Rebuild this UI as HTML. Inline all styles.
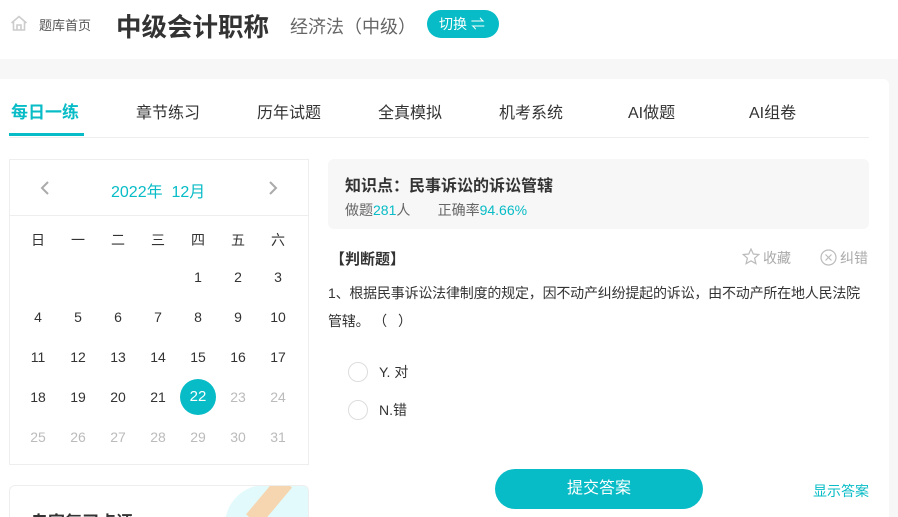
<!DOCTYPE html>
<html><head><meta charset="utf-8"><style>
*{margin:0;padding:0;box-sizing:border-box}
html{width:898px;height:517px;overflow:hidden}
body{width:898px;height:517px;overflow:hidden;background:#f7f7f7;font-family:"Liberation Sans","Noto Sans CJK SC",sans-serif;color:#333;position:relative}
.a{position:absolute;white-space:nowrap}
.hdr{position:absolute;left:0;top:0;width:898px;height:59px;background:#fff}
.card{position:absolute;left:0;top:79px;width:889px;height:438px;background:#fff;border-radius:0 6px 0 0}
.teal{color:#07bcc6}
.cal{position:absolute;left:9px;top:159px;width:300px;height:306px;border:1px solid #eee;background:#fff}
.cell{position:absolute;width:40px;text-align:center;font-size:14px;line-height:20px}
.g{color:#bbb}
</style></head><body>
<div class="hdr"></div>
<svg class="a" style="left:10px;top:15px" width="18" height="16" viewBox="0 0 18 16"><path d="M1.5 8 L9 1.5 L16.5 8 M3.5 6.5 V15 H14.5 V6.5 M7 15 V10 H11 V15" fill="none" stroke="#ccc" stroke-width="1.6"/></svg>
<div class="a" style="left:39px;top:15px;font-size:13px;color:#555">题库首页</div>
<div class="a" style="left:116px;top:7px;font-size:25.5px;font-weight:bold;color:#333">中级会计职称</div>
<div class="a" style="left:290px;top:13px;font-size:18px;color:#666">经济法（中级）</div>
<div class="a" style="left:427px;top:10px;width:72px;height:28px;border-radius:14px;background:#07bcc6;color:#fff;font-size:14px;line-height:28px;padding-left:12px">切换 <span style="font-size:14px">⇌</span></div>
<div class="card"></div>
<div class="a teal" style="left:11px;top:98px;font-size:17px;font-weight:bold">每日一练</div>
<div class="a" style="left:9px;top:133px;width:75px;height:3px;background:#07bcc6"></div>
<div class="a" style="left:9px;top:137px;width:860px;height:1px;background:#eee"></div>
<div class="a" style="left:136px;top:99px;font-size:16px">章节练习</div>
<div class="a" style="left:257px;top:99px;font-size:16px">历年试题</div>
<div class="a" style="left:378px;top:99px;font-size:16px">全真模拟</div>
<div class="a" style="left:499px;top:99px;font-size:16px">机考系统</div>
<div class="a" style="left:628px;top:99px;font-size:16px">AI做题</div>
<div class="a" style="left:749px;top:99px;font-size:16px">AI组卷</div>
<div class="cal">
<div class="a" style="left:0;top:55px;width:298px;height:1px;background:#eee"></div>
<svg class="a" style="left:29px;top:20px" width="12" height="16"><path d="M9 2 L3 8 L9 14" fill="none" stroke="#aaa" stroke-width="2"/></svg>
<svg class="a" style="left:257px;top:20px" width="12" height="16"><path d="M3 2 L9 8 L3 14" fill="none" stroke="#aaa" stroke-width="2"/></svg>
<div class="a teal" style="left:101px;top:18px;font-size:16px">2022年&nbsp;&nbsp;12月</div>
</div>
<div id="days"></div>
<div class="a" style="left:9px;top:485px;width:300px;height:32px;border:1px solid #eee;border-bottom:none;border-radius:6px 6px 0 0;background:#fff;overflow:hidden">
<div class="a" style="left:215px;top:-1px;width:90px;height:40px;background:#e2fafb;border-radius:40px 0 0 0"></div>
<div class="a" style="left:250px;top:-10px;width:18px;height:50px;background:#f5d6b0;transform:rotate(40deg)"></div>
<div class="a" style="left:21px;top:22px;font-size:17px;font-weight:bold">专家复习点评</div>
</div>
<div class="a" style="left:328px;top:159px;width:541px;height:70px;background:#f7f7f7;border-radius:6px"></div>
<div class="a" style="left:345px;top:172px;font-size:16px;font-weight:bold">知识点：民事诉讼的诉讼管辖</div>
<div class="a" style="left:345px;top:200px;font-size:14px;color:#666">做题<span class="teal">281</span>人&nbsp;&nbsp;&nbsp;&nbsp;&nbsp;&nbsp;&nbsp;正确率<span class="teal">94.66%</span></div>
<div class="a" style="left:330px;top:248px;font-size:15px;font-weight:bold">【判断题】</div>
<svg class="a" style="left:742px;top:248px" width="18" height="17" viewBox="0 0 18 17"><path d="M9 1 L11.3 6 L16.8 6.5 L12.6 10.2 L13.9 15.7 L9 12.8 L4.1 15.7 L5.4 10.2 L1.2 6.5 L6.7 6 Z" fill="none" stroke="#bbb" stroke-width="1.2"/></svg>
<div class="a" style="left:763px;top:248px;font-size:14px;color:#aaa">收藏</div>
<svg class="a" style="left:820px;top:249px" width="17" height="17"><circle cx="8.5" cy="8.5" r="7.5" fill="none" stroke="#bbb" stroke-width="1.2"/><path d="M5.5 5.5 L11.5 11.5 M11.5 5.5 L5.5 11.5" stroke="#bbb" stroke-width="1.2"/></svg>
<div class="a" style="left:840px;top:248px;font-size:14px;color:#aaa">纠错</div>
<div class="a" style="left:328px;top:279px;font-size:14px;line-height:28px;white-space:normal;width:545px;letter-spacing:-0.2px">1、根据民事诉讼法律制度的规定，因不动产纠纷提起的诉讼，由不动产所在地人民法院管辖。&nbsp;（&nbsp;&nbsp;&nbsp;）</div>
<div class="a" style="left:348px;top:362px;width:20px;height:20px;border:1px solid #ddd;border-radius:50%"></div>
<div class="a" style="left:379px;top:362px;font-size:14px">Y. 对</div>
<div class="a" style="left:348px;top:400px;width:20px;height:20px;border:1px solid #ddd;border-radius:50%"></div>
<div class="a" style="left:379px;top:400px;font-size:14px">N.错</div>
<div class="a" style="left:495px;top:469px;width:208px;height:40px;border-radius:20px;background:#07bcc6;color:#fff;font-size:16px;line-height:40px;text-align:center">提交答案</div>
<div class="a teal" style="left:813px;top:481px;font-size:14px">显示答案</div>
<div class="a" style="left:889px;top:79px;width:9px;height:438px;background:#f7f7f7"></div>
<script>
var h='',w=['日','一','二','三','四','五','六'];
for(var i=0;i<7;i++)h+='<div class="cell a" style="left:'+(18+40*i)+'px;top:230px">'+w[i]+'</div>';
for(var d=1;d<=31;d++){var p=d+3,c=p%7,r=Math.floor(p/7);var x=18+40*c,y=267+40*r;
if(d==22)h+='<div class="a" style="left:'+(x+2)+'px;top:'+(y-8)+'px;width:36px;height:36px;border-radius:50%;background:#07bcc6"></div><div class="cell a" style="left:'+x+'px;top:'+y+'px;color:#fff;font-size:15px">22</div>';
else h+='<div class="cell a'+(d>22?' g':'')+'" style="left:'+x+'px;top:'+y+'px">'+d+'</div>';}
document.getElementById('days').innerHTML=h;
</script>
</body></html>
